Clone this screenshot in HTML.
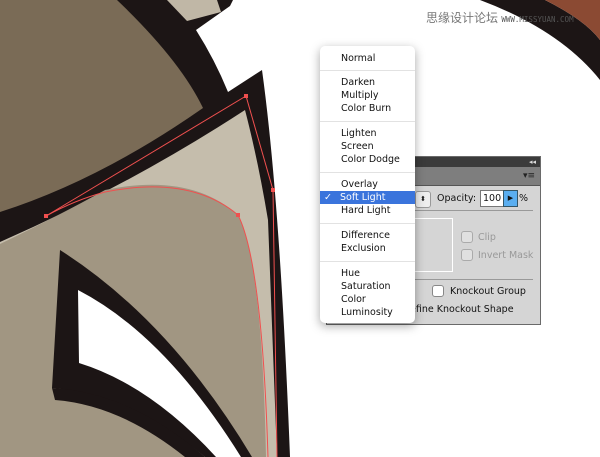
<!DOCTYPE html>
<html><head><meta charset="utf-8"><style>
body{margin:0;width:600px;height:457px;overflow:hidden;background:#fff;position:relative;font-family:"Lucida Grande","DejaVu Sans","Liberation Sans",sans-serif;}
.abs{position:absolute}
.menu{left:320px;top:46px;width:95px;height:277px;background:#fff;border-radius:5px;box-shadow:0 3px 10px rgba(0,0,0,.35);font-size:9.5px;color:#111}
.menu div.i{position:absolute;left:21px;height:13px;line-height:13px;white-space:nowrap}
.menu div.s{position:absolute;left:0;width:95px;height:1px;background:#e2e2e2}
.panel{left:326px;top:156px;width:215px;height:169px;background:#d5d5d5;border:1px solid #6a6a6a;box-sizing:border-box;font-size:9.5px;color:#111}
.cb{position:absolute;width:10px;height:10px;border:1px solid #aaa;border-radius:3px;background:#e0e0e0}
</style></head><body>
<svg class="abs" style="left:0;top:0" width="600" height="457" viewBox="0 0 600 457">
<path d="M0,0 L233,0 L230,6 L196,30 Q215,60 228,92 L262,70 Q280,200 290,457 L0,457 Z" fill="#1c1515"/>
<path d="M167,0 L217,0 L221,12 L187,21 Z" fill="#c0b7a6"/>
<path d="M0,0 L117,0 Q180,60 203,108 Q100,180 0,212 Z" fill="#7a6b56"/>
<path d="M245,110 Q258,160 268,220 L277,457 L0,457 L0,242 Q130,185 245,110 Z" fill="#c5bdac"/>
<path d="M0,244 Q60,215 105,190 Q190,172 238,215 Q262,262 266,457 L0,457 Z" fill="#a19682"/>
<path d="M60,250 Q170,320 252,457 L205,457 Q130,395 52,388 Z" fill="#1c1515"/>
<path d="M78,290 Q165,335 241,457 L216,457 Q150,385 79,363 Z" fill="#fff"/>
<path d="M0,395 L52,388 Q130,395 205,457 L0,457 Z" fill="#a19682"/>
<path d="M52,388 Q130,392 205,457 L185,457 Q120,405 55,400 Z" fill="#1c1515"/>
<g stroke="#f0504f" stroke-width="1" fill="none">
<path d="M46,216 L246,96 L273,190 L277,457"/>
<path d="M46,216 Q75,200 105,192 Q190,175 238,215 Q262,262 268,457"/>
</g>
<g fill="#f0504f"><rect x="44" y="214" width="4" height="4"/><rect x="244" y="94" width="4" height="4"/><rect x="271" y="188" width="4" height="4"/><rect x="236" y="213" width="4" height="4"/></g>
<path d="M480,0 L545,0 Q585,20 600,40 L600,80 Q560,30 480,0 Z" fill="#1c1515"/>
<path d="M545,0 L600,0 L600,40 Q585,20 545,0 Z" fill="#8b4a33"/>
</svg>
<div class="abs" style="left:426px;top:9px;font-size:12px;color:#777;font-family:'Liberation Sans','Noto Sans CJK SC',sans-serif;white-space:nowrap">思缘设计论坛 <span style="font-size:7.5px;font-family:'DejaVu Sans Mono',monospace;color:#555">WWW.MISSYUAN.COM</span></div>
<div class="abs panel">
<div class="abs" style="left:0;top:0;width:213px;height:10px;background:#3b3b3b"></div>
<div class="abs" style="right:4px;top:0;font-size:7px;color:#ddd;line-height:10px">◂◂</div>
<div class="abs" style="left:0;top:10px;width:213px;height:18px;background:#7e7e7e;border-bottom:1px solid #555"></div>
<div class="abs" style="right:5px;top:14px;font-size:9px;color:#222">▾≡</div>
<div class="abs" style="left:88px;top:34px;width:14px;height:15px;background:#eee;border:1px solid #999;border-radius:3px;font-size:7px;text-align:center;line-height:15px">⬍</div>
<div class="abs" style="left:110px;top:36px">Opacity:</div>
<div class="abs" style="left:153px;top:33px;width:22px;height:15px;background:#fff;border:1px solid #777;line-height:15px;padding-left:2px">100</div>
<div class="abs" style="left:176px;top:33px;width:13px;height:15px;background:#5aaef0;border:1px solid #356;font-size:7px;text-align:center;line-height:15px">▶</div>
<div class="abs" style="left:192px;top:36px">%</div>
<div class="abs" style="left:88px;top:53px;width:118px;height:1px;background:#999"></div>
<div class="abs" style="left:78px;top:61px;width:48px;height:54px;border:1px solid #fff;box-sizing:border-box"></div>
<div class="cb" style="left:134px;top:74px"></div><div class="abs" style="left:151px;top:75px;color:#999">Clip</div>
<div class="cb" style="left:134px;top:92px"></div><div class="abs" style="left:151px;top:93px;color:#999">Invert Mask</div>
<div class="abs" style="left:88px;top:122px;width:118px;height:1px;background:#999"></div>
<div class="abs" style="left:76px;top:129px">g</div>
<div class="cb" style="left:105px;top:128px;background:#fff;border-color:#888"></div><div class="abs" style="left:123px;top:129px">Knockout Group</div>
<div class="abs" style="left:62px;top:147px">ck Define Knockout Shape</div>
</div>
<div class="abs menu">
<div class="i" style="top:6px">Normal</div>
<div class="s" style="top:24px"></div>
<div class="i" style="top:30px">Darken</div>
<div class="i" style="top:43px">Multiply</div>
<div class="i" style="top:56px">Color Burn</div>
<div class="s" style="top:75px"></div>
<div class="i" style="top:81px">Lighten</div>
<div class="i" style="top:94px">Screen</div>
<div class="i" style="top:107px">Color Dodge</div>
<div class="s" style="top:126px"></div>
<div class="i" style="top:132px">Overlay</div>
<div class="abs" style="left:0;top:145px;width:95px;height:13px;background:#3a74dc"></div>
<div class="i" style="top:145px;color:#fff;left:4px">✓ <span style="margin-left:5px">Soft Light</span></div>
<div class="i" style="top:158px">Hard Light</div>
<div class="s" style="top:177px"></div>
<div class="i" style="top:183px">Difference</div>
<div class="i" style="top:196px">Exclusion</div>
<div class="s" style="top:215px"></div>
<div class="i" style="top:221px">Hue</div>
<div class="i" style="top:234px">Saturation</div>
<div class="i" style="top:247px">Color</div>
<div class="i" style="top:260px">Luminosity</div>
</div>
</body></html>
